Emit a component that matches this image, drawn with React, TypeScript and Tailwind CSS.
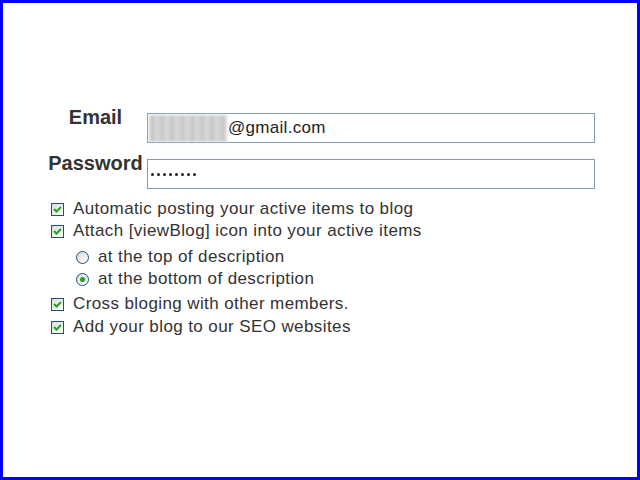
import React from "react";

function Check() {
  return (
    <span className="inline-flex h-[13px] w-[13px] shrink-0 items-center justify-center border border-[#1c5180] bg-gradient-to-br from-[#dcdcd7] to-white">
      <svg width="9" height="9" viewBox="0 0 9 9">
        <path d="M1 4 L3.5 6.5 L8 2" stroke="#21a121" strokeWidth="2" fill="none" />
      </svg>
    </span>
  );
}

function Radio({ on }: { on?: boolean }) {
  return (
    <span className="inline-flex h-[13px] w-[13px] shrink-0 items-center justify-center rounded-full border border-[#1c5180] bg-gradient-to-br from-[#dcdcd7] to-white">
      {on && <span className="h-[5px] w-[5px] rounded-full bg-[#21a121]" />}
    </span>
  );
}

export default function App() {
  const dots = [0, 1, 2, 3, 4, 5, 6, 7];
  return (
    <div
      className="h-[480px] w-[640px] border-[3px] border-[#0000ff] bg-white text-[#222]"
      style={{ fontFamily: '"Liberation Sans", Arial, sans-serif' }}
    >
      <div className="pt-[102px] pl-[41px]">
        <div className="flex items-start">
          <div className="w-[103px] text-center text-[20px] leading-[24px] font-bold text-[#333]">Email</div>
          <div className="mt-[8px] flex h-[30px] w-[448px] items-center border border-[#7f9db9] pl-[1px] text-[17px] tracking-[0.3px]">
            <span className="mr-[1px] h-[27px] w-[78px] bg-[repeating-linear-gradient(90deg,#d6d6d6_0px,#c2c2c2_4px,#dcdcdc_7px,#cfcfcf_10px)] blur-[1.5px]" />
            <span>@gmail.com</span>
          </div>
        </div>
        <div className="mt-[8px] flex items-start">
          <div className="w-[103px] text-center text-[20px] leading-[24px] font-bold text-[#333]">Password</div>
          <div className="mt-[8px] flex h-[30px] w-[448px] items-center gap-[3px] border border-[#7f9db9] pl-[3px]">
            {dots.map((d) => (
              <span key={d} className="h-[3px] w-[3px] rounded-full bg-[#222]" />
            ))}
          </div>
        </div>
        <div className="mt-[9px] pl-[7px] text-[17px] leading-[22px] tracking-[0.4px] text-[#333]">
          <div className="flex items-center gap-[9px]"><Check />Automatic posting your active items to blog</div>
          <div className="flex items-center gap-[9px]"><Check />Attach [viewBlog] icon into your active items</div>
          <div className="mt-[4px] pl-[25px]">
            <div className="flex items-center gap-[9px]"><Radio />at the top of description</div>
            <div className="flex items-center gap-[9px]"><Radio on />at the bottom of description</div>
          </div>
          <div className="mt-[3px] flex items-center gap-[9px]"><Check />Cross bloging with other members.</div>
          <div className="mt-[1px] flex items-center gap-[9px]"><Check />Add your blog to our SEO websites</div>
        </div>
      </div>
    </div>
  );
}
